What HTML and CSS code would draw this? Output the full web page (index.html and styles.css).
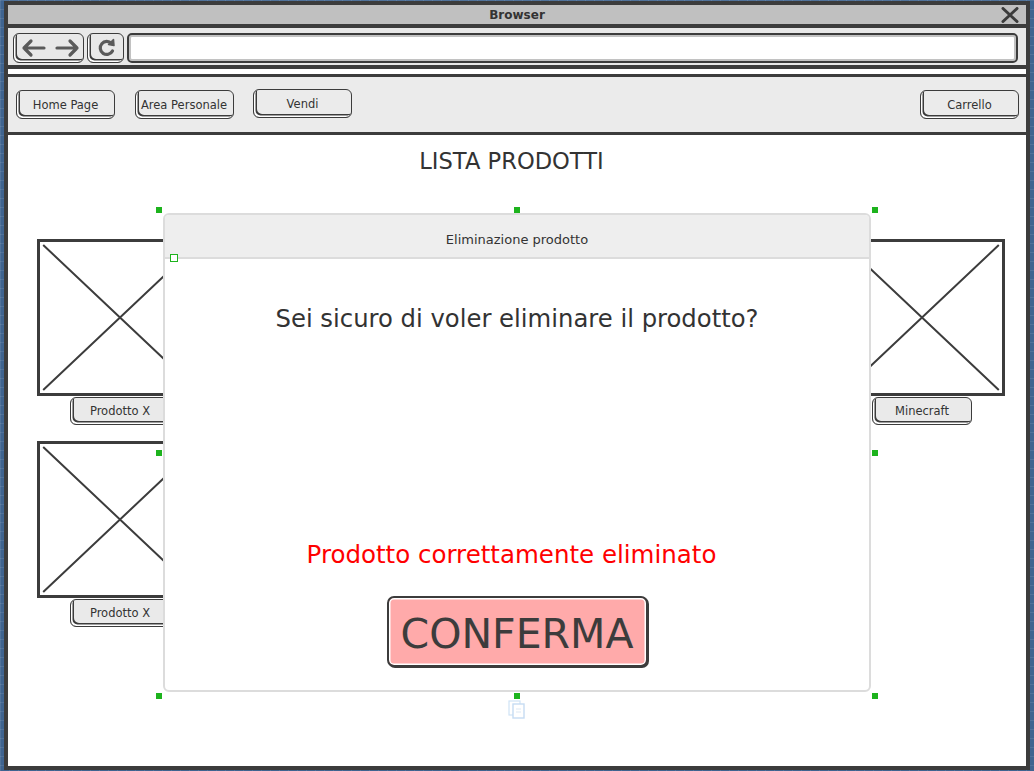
FILE: index.html
```html
<!DOCTYPE html>
<html lang="it">
<head>
<meta charset="utf-8">
<title>Lista prodotti</title>
<link rel="stylesheet" href="styles.css">
</head>
<body>
<div class="window">
  <div class="titlebar">
    <span class="title">Browser</span>
    <svg class="close" width="18" height="16" viewBox="0 0 18 16"><path d="M2 1.5 L16 14.5 M16 1.5 L2 14.5" stroke="#3c3c3c" stroke-width="3" stroke-linecap="round" fill="none"/></svg>
  </div>
  <div class="toolbar">
    <div class="btn tbtn arrows">
      <svg width="67" height="26" viewBox="0 0 67 26"><path d="M9 13 H29 M16 6 L9 13 L16 20 M42 13 H62 M55 6 L62 13 L55 20" stroke="#5a5a5a" stroke-width="3.2" stroke-linecap="round" stroke-linejoin="round" fill="none"/></svg>
    </div>
    <div class="btn tbtn refresh">
      <svg width="33" height="26" viewBox="0 0 33 26"><path d="M22.5 8.5 A6.5 6.5 0 1 0 23.5 16" stroke="#5a5a5a" stroke-width="3.2" stroke-linecap="round" fill="none"/><path d="M19.5 9.5 L24.5 4.5 L25 10.5 Z" fill="#5a5a5a" stroke="#5a5a5a" stroke-width="1.5" stroke-linejoin="round"/></svg>
    </div>
    <div class="url"></div>
  </div>
  <div class="strip"></div>
  <nav class="navbar">
    <div class="btn nbtn">Home Page</div>
    <div class="btn nbtn">Area Personale</div>
    <div class="btn nbtn vendi">Vendi</div>
    <div class="btn nbtn cart">Carrello</div>
  </nav>
  <main class="content">
    <h1 class="page-title">LISTA PRODOTTI</h1>
    <div class="products">
      <div class="product">
        <div class="img"><svg viewBox="0 0 100 100" preserveAspectRatio="none"><path d="M2 2 L98 98 M98 2 L2 98" stroke="#3c3c3c" stroke-width="2" vector-effect="non-scaling-stroke" fill="none"/></svg></div>
        <div class="btn pbtn">Prodotto X</div>
      </div>
      <div class="product"></div>
      <div class="product">
        <div class="img"><svg viewBox="0 0 100 100" preserveAspectRatio="none"><path d="M2 2 L98 98 M98 2 L2 98" stroke="#3c3c3c" stroke-width="2" vector-effect="non-scaling-stroke" fill="none"/></svg></div>
        <div class="btn pbtn">Minecraft</div>
      </div>
      <div class="product">
        <div class="img"><svg viewBox="0 0 100 100" preserveAspectRatio="none"><path d="M2 2 L98 98 M98 2 L2 98" stroke="#3c3c3c" stroke-width="2" vector-effect="non-scaling-stroke" fill="none"/></svg></div>
        <div class="btn pbtn">Prodotto X</div>
      </div>
      <div class="product"></div>
      <div class="product"></div>
    </div>

    <section class="modal">
      <header class="modal-header">Eliminazione prodotto</header>
      <div class="modal-body">
        <p class="question">Sei sicuro di voler eliminare il prodotto?</p>
        <p class="success">Prodotto correttamente eliminato</p>
        <div class="confirm">CONFERMA</div>
      </div>
    </section>

    <span class="handle h-tl"></span>
    <span class="handle h-tm"></span>
    <span class="handle h-tr"></span>
    <span class="handle h-ml"></span>
    <span class="handle h-mr"></span>
    <span class="handle h-bl"></span>
    <span class="handle h-bm"></span>
    <span class="handle h-br"></span>
    <span class="anchor"></span>
    <svg class="doc-icon" width="18" height="19" viewBox="0 0 18 19"><rect x="1" y="1" width="11" height="14" fill="#fff" stroke="#cfe3f6" stroke-width="1.2"/><rect x="5" y="4" width="11" height="14" fill="#fff" stroke="#c6dcf3" stroke-width="1.4"/><path d="M8 9 H13 M8 12 H13" stroke="#dde8f3" stroke-width="1"/></svg>
  </main>
</div>
</body>
</html>
```

FILE: styles.css
```css
html, body {
  margin: 0;
  padding: 0;
}

body {
  height: 771px;
  overflow: hidden;
  background-color: #3f6490;
  background-image:
    linear-gradient(rgba(255, 255, 255, 0.09) 1px, transparent 1px),
    linear-gradient(90deg, rgba(255, 255, 255, 0.09) 1px, transparent 1px);
  background-size: 9px 9px;
  font-family: "DejaVu Sans", "Noto Sans", sans-serif;
  color: #333;
}

.window {
  margin: 1px 0 0 4px;
  width: 1026px;
  height: 769px;
  box-sizing: border-box;
  border: 4px solid #3c3c3c;
  background: #fff;
  display: flex;
  flex-direction: column;
}

.titlebar {
  position: relative;
  height: 23px;
  box-sizing: border-box;
  background: #c0c0c0;
  border-bottom: 4px solid #3c3c3c;
  display: flex;
  justify-content: center;
  align-items: center;
}

.title {
  font-size: 12px;
  font-weight: bold;
  color: #333;
}

.close {
  position: absolute;
  right: 7px;
  top: 2px;
}

.btn {
  box-sizing: border-box;
  border: 1.5px solid #3c3c3c;
  border-radius: 6px;
  background: #eaeaea;
  box-shadow: inset 1.5px -1.5px 0 #fff, inset 3px -3px 0 #3c3c3c;
  display: flex;
  align-items: center;
  justify-content: center;
  font-size: 11.5px;
  color: #333;
  white-space: nowrap;
}

.toolbar {
  height: 41px;
  box-sizing: border-box;
  background: #e8e8e8;
  border-bottom: 4px solid #3c3c3c;
  display: flex;
  gap: 3px;
  padding: 5px 8px 0 5px;
}

.tbtn {
  height: 30px;
  background: #e8e8e8;
}

.arrows {
  width: 71px;
}

.refresh {
  width: 37px;
}

.url {
  flex: 1;
  height: 30px;
  box-sizing: border-box;
  border: 2px solid #3c3c3c;
  border-radius: 5px;
  background: #fff;
  box-shadow: inset 0 0 0 2px #c2c2c2;
}

.strip {
  height: 8px;
  box-sizing: border-box;
  background: #fff;
  border-bottom: 3px solid #3c3c3c;
}

.navbar {
  height: 58px;
  box-sizing: border-box;
  background: #ebebeb;
  border-bottom: 3px solid #3c3c3c;
  display: flex;
  align-items: flex-start;
  gap: 19.5px;
  padding: 13px 7px 0 8px;
}

.nbtn {
  width: 99px;
  height: 29px;
  background: #ebebeb;
}

.vendi {
  margin-top: -1px;
}

.cart {
  margin-left: auto;
}

.content {
  flex: 1;
  position: relative;
  display: flex;
  flex-direction: column;
}

.page-title {
  margin: 13px 0 0;
  padding-right: 11px;
  font-size: 22.6px;
  line-height: 27px;
  font-weight: normal;
  text-align: center;
  color: #333;
}

.products {
  margin-top: 64px;
  padding: 0 21px 0 29px;
  display: grid;
  grid-template-columns: repeat(3, 166px);
  justify-content: space-between;
  row-gap: 16px;
}

.product {
  display: flex;
  flex-direction: column;
  align-items: center;
}

.img {
  width: 166px;
  height: 157px;
  box-sizing: border-box;
  border: 3px solid #3c3c3c;
  background: #fff;
}

.img svg {
  display: block;
  width: 100%;
  height: 100%;
}

.pbtn {
  margin-top: 1px;
  width: 100px;
  height: 28px;
}

.modal {
  position: absolute;
  left: 155px;
  top: 78px;
  width: 708px;
  height: 479px;
  box-sizing: border-box;
  border: 2px solid #dcdcdc;
  border-radius: 6px;
  background: #fff;
  overflow: hidden;
  display: flex;
  flex-direction: column;
}

.modal-header {
  height: 44px;
  box-sizing: border-box;
  background: #eeeeee;
  border-bottom: 2px solid #dcdcdc;
  padding-top: 16px;
  line-height: 18px;
  font-size: 13px;
  text-align: center;
  color: #333;
}

.modal-body {
  display: flex;
  flex-direction: column;
  align-items: center;
}

.question {
  margin: 45px 0 0;
  font-size: 24.3px;
  line-height: 30px;
  color: #333;
}

.success {
  margin: 206px 0 0;
  padding-right: 11px;
  font-size: 24.5px;
  line-height: 30px;
  color: #ff0000;
}

.confirm {
  margin-top: 26px;
  width: 261px;
  height: 71px;
  box-sizing: border-box;
  padding-top: 4px;
  border: 2px solid #3c3c3c;
  border-radius: 7px;
  background: #ffaaaa;
  box-shadow: inset 0 0 0 1.5px #fff, 1px 1px 0 #3c3c3c;
  display: flex;
  align-items: center;
  justify-content: center;
  font-size: 41px;
  color: #3c3c3c;
}

.handle {
  position: absolute;
  width: 6px;
  height: 6px;
  background: #1db31d;
}

.h-tl { left: 148px; top: 72px; }
.h-tm { left: 506px; top: 72px; }
.h-tr { left: 864px; top: 72px; }
.h-ml { left: 148px; top: 315px; }
.h-mr { left: 864px; top: 315px; }
.h-bl { left: 148px; top: 558px; }
.h-bm { left: 506px; top: 558px; }
.h-br { left: 864px; top: 558px; }

.anchor {
  position: absolute;
  left: 162px;
  top: 119px;
  width: 8px;
  height: 8px;
  box-sizing: border-box;
  border: 1px solid #1db31d;
  background: #fff;
}

.doc-icon {
  position: absolute;
  left: 500px;
  top: 565px;
}
```
